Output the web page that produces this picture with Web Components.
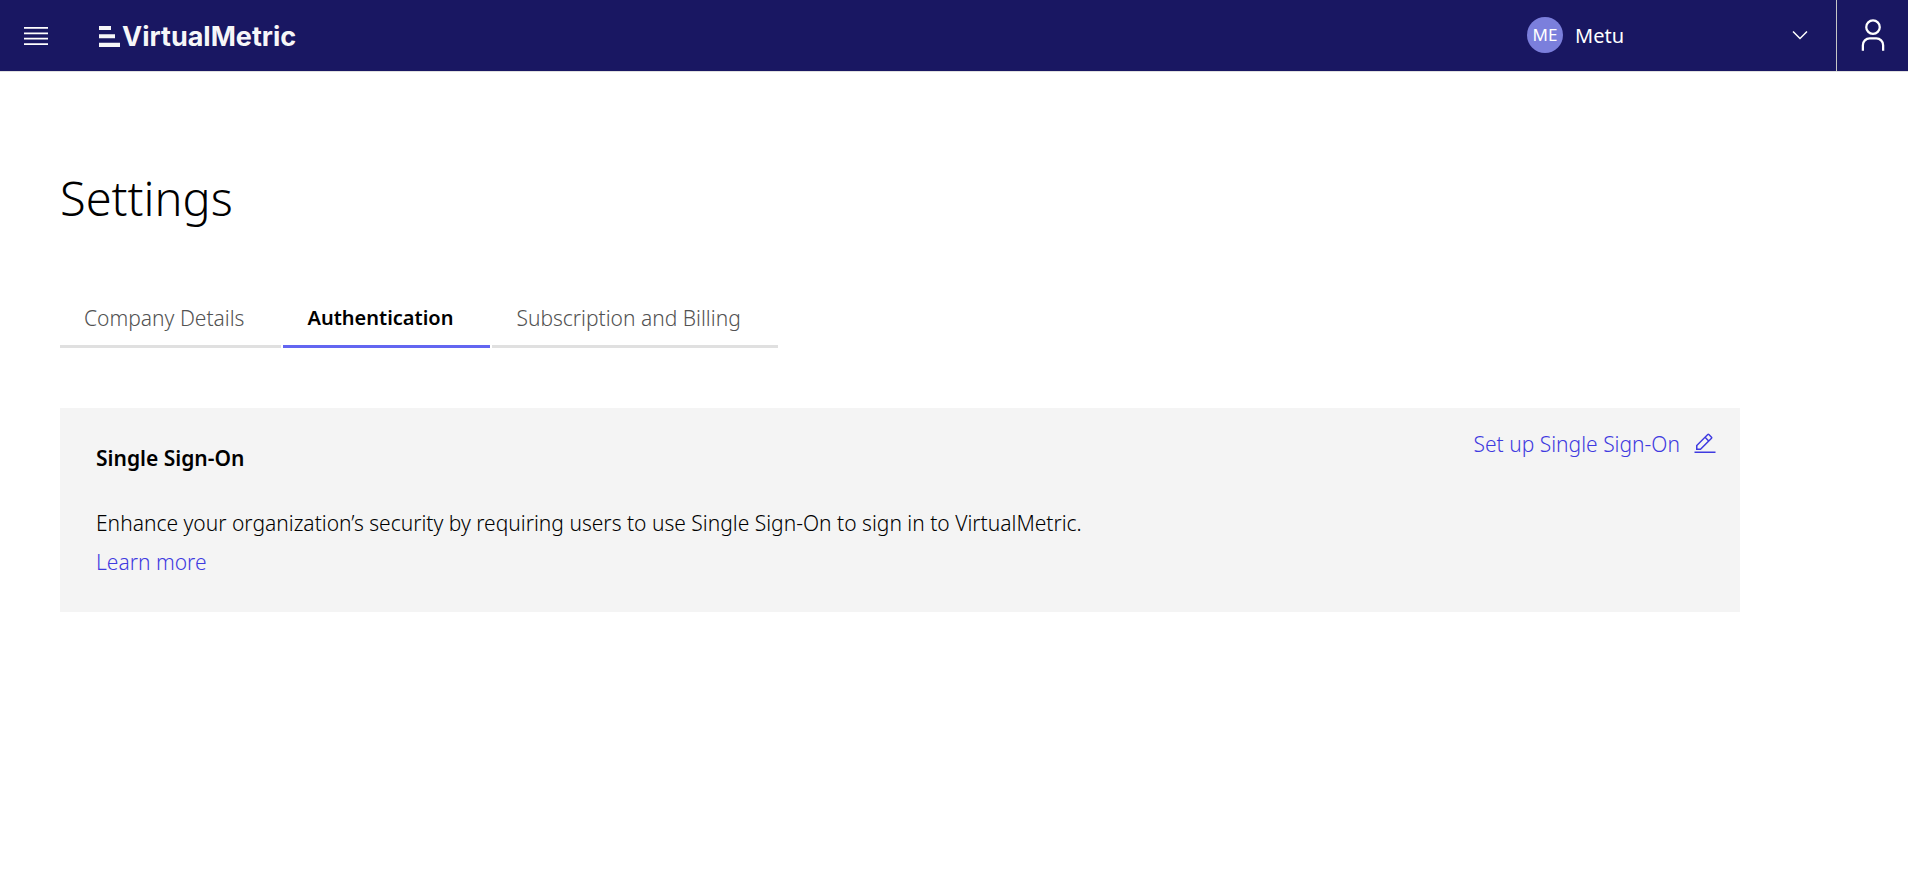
<!DOCTYPE html>
<html lang="en">
<head>
<meta charset="utf-8">
<title>Settings</title>
<style>
body{margin:0;background:#fff;color:#000;font-family:"Noto Sans",sans-serif;font-size:21px;font-weight:300}
</style>
</head>
<body>
<vm-header company="Metu" initials="ME"></vm-header>
<vm-page heading="Settings">
  <vm-tabs slot="tabs" role="tablist">
    <vm-tab>Company Details</vm-tab>
    <vm-tab selected>Authentication</vm-tab>
    <vm-tab>Subscription and Billing</vm-tab>
  </vm-tabs>
  <vm-panel heading="Single Sign-On">
    <vm-action slot="action">Set up Single Sign-On</vm-action>
    <span>Enhance your organization’s security by requiring users to use Single Sign-On to sign in to VirtualMetric.</span>
    <vm-link slot="more">Learn more</vm-link>
  </vm-panel>
</vm-page>

<script>
const define = (name, render) => customElements.define(name, class extends HTMLElement {
  constructor() {
    super();
    this.attachShadow({ mode: 'open' });
  }
  connectedCallback() {
    this.shadowRoot.innerHTML = render(this);
  }
});

define('vm-logo', () => `
<style>
:host{display:block}
a{display:flex;align-items:center;gap:2px;color:#f6f6f8;text-decoration:none;font:700 27px/36px Inter,sans-serif}
svg{display:block}
</style>
<a href="#" aria-label="VirtualMetric home">
  <svg width="21" height="21" viewBox="0 0 21 21" fill="#f6f6f8" aria-hidden="true"><path d="M0 0h12v4H0zM0 8.300h16v4H0zM0 16.700h21V21H0z"/></svg>
  <span>VirtualMetric</span>
</a>`);

define('vm-avatar', () => `
<style>
:host{display:flex;align-items:center;justify-content:center;flex:none;width:36px;height:36px;border-radius:50%;background:#7b7fdc;color:#fff;font-size:17px;font-weight:400;line-height:24px}
</style><slot></slot>`);

define('vm-header', el => `
<style>
:host{display:block}
header{display:flex;align-items:stretch;height:71px;background:#191762;border-bottom:1px solid #e0e0e0;color:#fff}
button{flex:none;width:72px;border:0;padding:0;background:none;color:#fff;display:flex;align-items:center;justify-content:center}
svg{display:block;fill:currentColor}
vm-logo{align-self:center;margin-left:27px;padding-top:2px}
.company{flex:none;width:309px;box-sizing:border-box;margin-left:auto;display:flex;align-items:center;gap:12px;padding:0 24px 1px 0}
.pick{flex:1;display:grid;align-items:center}
.pick>*{grid-area:1/1}
select{appearance:none;width:100%;height:48px;margin:0;padding:0;border:0;background:none;color:#fff;font-family:inherit;font-size:20px;font-weight:400}
.pick svg{justify-self:end;pointer-events:none}
.user{border-left:1px solid #c6c6c6;padding-bottom:1px}
</style>
<header>
  <button type="button" aria-label="Open menu"><svg width="30" height="30" viewBox="0 0 20 20"><path d="M2 14.8h16V16H2zM2 11.2h16v1.2H2zM2 7.6h16v1.2H2zM2 4h16v1.2H2z"/></svg></button>
  <vm-logo></vm-logo>
  <div class="company">
    <vm-avatar>${el.getAttribute('initials')}</vm-avatar>
    <div class="pick">
      <select aria-label="Company"><option>${el.getAttribute('company')}</option></select>
      <svg width="24" height="24" viewBox="0 0 16 16" aria-hidden="true"><path d="M8 11 3 6l.7-.7L8 9.6l4.3-4.3.7.7z"/></svg>
    </div>
  </div>
  <button class="user" type="button" aria-label="User profile"><svg width="36" height="36" viewBox="0 0 32 32"><path d="M16 4a5 5 0 1 1-5 5 5 5 0 0 1 5-5m0-2a7 7 0 1 0 7 7 7 7 0 0 0-7-7zM26 30h-2v-5a5 5 0 0 0-5-5h-6a5 5 0 0 0-5 5v5H6v-5a7 7 0 0 1 7-7h6a7 7 0 0 1 7 7z"/></svg></button>
</header>`);

define('vm-page', el => `
<style>
:host{display:block}
main{padding:96px 168px 60px 60px}
h1{margin:0;font-size:47px;line-height:60px;font-weight:inherit}
.tabs{margin:76px 0 60px}
</style>
<main>
  <h1>${el.getAttribute('heading')}</h1>
  <div class="tabs"><slot name="tabs"></slot></div>
  <slot></slot>
</main>`);

define('vm-tabs', () => `
<style>
:host{display:flex;gap:2px}
</style><slot></slot>`);

define('vm-tab', el => `
<style>
:host{display:block}
button{display:block;margin:0;border:0;border-bottom:3px solid #e0e0e0;padding:0 37px 13px 24px;background:none;color:#525252;font:inherit;line-height:28px}
:host([selected]) button{border-color:#6366f1;color:#000;font-size:20px;font-weight:600}
</style>
<button type="button" role="tab" aria-selected="${el.hasAttribute('selected')}"><slot></slot></button>`);

define('vm-panel', el => `
<style>
:host{display:block}
section{display:flex;align-items:flex-start;justify-content:space-between;gap:24px;padding-right:23px;background:#f4f4f4}
.body{padding:30px 0 30px 36px;line-height:39px}
h2{margin:0 0 26px;font-size:21px;line-height:40px;font-weight:600}
p{margin:0}
.action{flex:none;padding-top:24px}
</style>
<section>
  <div class="body">
    <h2>${el.getAttribute('heading')}</h2>
    <p><slot></slot></p>
    <slot name="more"></slot>
  </div>
  <div class="action"><slot name="action"></slot></div>
</section>`);

define('vm-action', () => `
<style>
:host{display:block}
button{display:flex;align-items:center;gap:13px;margin:0;border:0;padding:0;background:none;color:#3f3ae0;font:inherit;line-height:24px}
svg{display:block;fill:currentColor}
</style>
<button type="button"><span><slot></slot></span><svg width="24" height="24" viewBox="0 0 32 32" aria-hidden="true"><path d="M2 26h28v2H2zM25.4 9a1.98 1.98 0 0 0 0-2.8l-3.6-3.6a1.98 1.98 0 0 0-2.8 0l-15 15V24h6.4zM20.4 4 24 7.6l-3 3L17.4 7zM6 22v-3.6l10-10 3.6 3.6-10 10z"/></svg></button>`);

define('vm-link', () => `
<style>
:host{display:block}
a{color:#3f3ae0;text-decoration:none}
</style><a href="#"><slot></slot></a>`);
</script>
</body>
</html>
